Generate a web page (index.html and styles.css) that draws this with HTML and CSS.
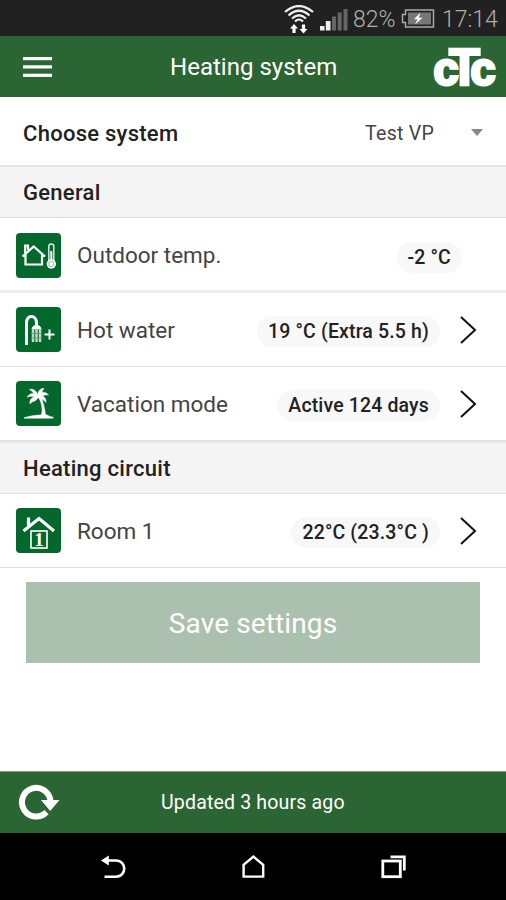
FILE: index.html
```html
<!DOCTYPE html>
<html lang="en">
<head>
  <meta charset="UTF-8" />
  <meta name="viewport" content="width=device-width, initial-scale=1.0" />
  <title>Heating system</title>
  <link rel="stylesheet" href="styles.css">
</head>
<body>
  <div class="status-bar">
    <svg class="wifi" width="30" height="30" viewBox="0 0 30 30" fill="none" stroke="#eee" stroke-width="2.200">
      <path d="M1 7Q15 -5 29 7" />
      <path d="M4.500 10.500Q15 1 25.500 10.500" />
      <path d="M8 13.500Q15 7 22 13.500" />
      <path d="M11 16.500Q15 12.500 19 16.500" />
      <path d="M10 19l4 4.500h-2.400v4.500h-3.200v-4.500h-2.400z" fill="#fff" stroke="none" />
      <path d="M19.500 28.500l4-4.500h-2.400v-4.500h-3.200v4.500h-2.400z" fill="#fff" stroke="none" />
    </svg>
    <svg class="signal" width="28" height="22" viewBox="0 0 28 22">
      <rect x="0" y="17" width="4.500" height="4.500" fill="#eee" />
      <rect x="5.800" y="12" width="4.700" height="9.500" fill="#eee" />
      <rect x="12" y="7.500" width="4" height="14" fill="#666" />
      <rect x="17.700" y="3.500" width="4" height="18" fill="#666" />
      <rect x="23.500" y="0" width="4" height="21.500" fill="#666" />
    </svg>
    <span class="percent">82%</span>
    <svg class="battery" width="34" height="19" viewBox="0 0 34 19">
      <path d="M4.500 1H32.500V18H4.500V13.500H1.500V5.500H4.500z" fill="none" stroke="#aaa" stroke-width="1.500" />
      <rect x="7" y="3.500" width="23" height="12" fill="#777" />
      <path d="M19.500 3.500L13 10.200h3.600L14 15.500l7.500-6.700h-3.800z" fill="#fff" />
    </svg>
    <span class="clock">17:14</span>
  </div>

  <header>
    <svg class="menu" width="29" height="22" viewBox="0 0 29 22" fill="#fff">
      <rect y="1" width="29" height="3.200" />
      <rect y="9.300" width="29" height="3.200" />
      <rect y="17.700" width="29" height="3.200" />
    </svg>
    <h1>Heating system</h1>
    <svg class="logo" width="66" height="61" viewBox="0 0 66 61" role="img" aria-label="CTC">
      <text y="49"><tspan class="logo-c" x="2.500" textLength="25" lengthAdjust="spacingAndGlyphs">c</tspan><tspan class="logo-t" x="18" textLength="31" lengthAdjust="spacingAndGlyphs">T</tspan><tspan class="logo-c" x="39.500" textLength="25" lengthAdjust="spacingAndGlyphs">c</tspan></text>
    </svg>
  </header>

  <main>
    <div class="choose">
      <h2>Choose system</h2>
      <span class="selected">Test VP</span>
      <span class="caret"></span>
    </div>

    <h2 class="section-title">General</h2>
    <div class="row thick">
      <svg class="icon" viewBox="0 0 45 45">
        <rect width="45" height="45" rx="4" fill="#04682d" />
        <path d="M6.500 23.500L17.700 13.500L29 23.500M9.500 21V31.500H26V21M9.200 20V12.500H12V17" fill="none" stroke="#fff" stroke-width="2.200" />
        <rect x="32.800" y="11" width="5" height="19" rx="2.500" fill="none" stroke="#d9e8dc" stroke-width="1.500" />
        <path d="M35.300 18V29" stroke="#fff" stroke-width="2" />
        <circle cx="35.300" cy="31" r="4.700" fill="#fff" />
        <circle cx="35.300" cy="31" r="2.600" fill="none" stroke="#78a985" stroke-width=".8" />
      </svg>
      <span class="label">Outdoor temp.</span>
      <span class="value last">-2 °C</span>
    </div>
    <div class="row">
      <svg class="icon" viewBox="0 0 45 45">
        <rect width="45" height="45" rx="4" fill="#04682d" />
        <path d="M10.500 38V16C10.500 7 20.500 7.500 20.500 16V19" fill="none" stroke="#fff" stroke-width="3" />
        <path d="M15.500 22.500Q16 18 20.500 18T25.500 22.500z" fill="#fff" />
        <path d="M17 22.500V35M20.500 22.500V35M24 22.500V35" stroke="#c5dccb" stroke-width="2.400" />
        <path d="M15 26.500H26M15 31H26" stroke="#629d73" stroke-width="1" />
        <path d="M28.500 27.500H38.500M33.500 22.500V32.500" stroke="#fff" stroke-width="2" />
      </svg>
      <span class="label">Hot water</span>
      <span class="value">19 °C (Extra 5.5 h)</span>
      <svg class="arrow" viewBox="0 0 17 28"><path d="M1 1L15 14L1 27" /></svg>
    </div>
    <div class="row">
      <svg class="icon" viewBox="0 0 45 45">
        <rect width="45" height="45" rx="4" fill="#04682d" />
        <g fill="#fff" stroke="#fff" stroke-width=".5">
          <path d="M22 15C18 11 14 12 11 16C16 14.500 18 16 22 16.500z" />
          <path d="M22 14C20 9 17 7.500 13.500 8.500C17 10 17.500 13 21 15.500z" />
          <path d="M22 15C21.500 10 24 7.500 28 7.500C25.500 10 26 13 23.500 15.500z" />
          <path d="M22 15C25 10.500 29 10 32.500 14C28.500 13 26 16 22.500 16.500z" />
          <path d="M22 15C27 14 30.500 16.500 30 21.500C27.500 18 25 18 22 16.500z" />
          <path d="M22 15C17 15.500 13 18 14 23C17 19 19 22 22.500 16z" />
          <path d="M22 15.500L24.500 15C27 20 29 28 29.500 34H25.500C27 28 25.500 21 22 15.500z" />
          <path d="M8 36.800Q17 34 24 34Q28 32.500 31 34Q34 36 37.500 36.300L37 37.200H8z" />
        </g>
      </svg>
      <span class="label">Vacation mode</span>
      <span class="value">Active 124 days</span>
      <svg class="arrow" viewBox="0 0 17 28"><path d="M1 1L15 14L1 27" /></svg>
    </div>

    <h2 class="section-title">Heating circuit</h2>
    <div class="row">
      <svg class="icon" viewBox="0 0 45 45">
        <rect width="45" height="45" rx="4" fill="#04682d" />
        <path d="M7.500 23L23 10.500L38 23M12.500 17.500V9.500" fill="none" stroke="#fff" stroke-width="3.200" />
        <rect x="15" y="23" width="16" height="17" fill="none" stroke="#fff" stroke-width="1.600" />
        <text class="room-number" x="23" y="38" text-anchor="middle">1</text>
      </svg>
      <span class="label">Room 1</span>
      <span class="value">22°C (23.3°C )</span>
      <svg class="arrow" viewBox="0 0 17 28"><path d="M1 1L15 14L1 27" /></svg>
    </div>

    <button class="save" disabled>Save settings</button>
  </main>

  <footer>
    <svg class="refresh" width="42" height="38" viewBox="0 0 42 38">
      <path d="M28.500 29.200A14.300 14.300 0 1 1 32.500 18" fill="none" stroke="#fff" stroke-width="6" />
      <path d="M23 17H41.500L32.200 28z" fill="#fff" />
    </svg>
    <span>Updated 3 hours ago</span>
  </footer>

  <nav>
    <svg width="26" height="26" viewBox="0 0 26 26" fill="none" stroke="#fff" stroke-width="2.600">
      <path d="M6 6.500H16C27 6.500 27 22.700 16 22.700H4.500" />
      <path d="M1 6.500L8.800 1.500V11.500z" fill="#fff" stroke="none" />
    </svg>
    <svg width="26" height="26" viewBox="0 0 26 26" fill="none" stroke="#fff" stroke-width="2.400">
      <path d="M3.600 22.600V10.800L13.400 2.600L23.200 10.800V22.600z" />
    </svg>
    <svg width="26" height="26" viewBox="0 0 26 26" fill="none" stroke="#fff" stroke-width="2.800">
      <rect x="2.800" y="7" width="17.500" height="15.700" />
      <path d="M10.500 2.800H24.300V16.500" />
    </svg>
  </nav>
</body>
</html>
```

FILE: styles.css
```css
* {
  box-sizing: border-box;
}
body {
  margin: 0;
  height: 900px;
  display: flex;
  flex-direction: column;
  font-family: Roboto, sans-serif;
  background: #fff;
  color: #222;
  overflow: hidden;
}
.status-bar {
  height: 36px;
  padding-right: 8px;
  background: #212121;
  color: #b0b0b0;
  display: flex;
  align-items: center;
  justify-content: flex-end;
  font-size: 23px;
  font-weight: 300;
  line-height: 36px;
}
.wifi {
  margin: 3px 6px 0 0;
}
.signal {
  margin: 3px 5px 0 0;
}
.battery {
  margin: 1px 7px 0 5px;
}
.percent,
.clock {
  padding-top: 3px;
  white-space: nowrap;
}
.percent {
  width: 43px;
}
.clock {
  width: 56px;
}
header {
  height: 61px;
  padding: 0 9px 0 23px;
  background: #2c6534;
  display: flex;
  align-items: center;
  justify-content: space-between;
}
header h1 {
  margin: 0 0 0 24px;
  width: 167px;
  color: #fff;
  font-size: 24px;
  font-weight: 400;
  letter-spacing: 0.02px;
  white-space: nowrap;
}
.logo {
  overflow: visible;
}
.logo text {
  fill: #fff;
  stroke: #fff;
  font-family: "Liberation Sans", sans-serif;
  font-weight: 700;
}
.logo-c {
  font-size: 46px;
  stroke-width: 3px;
}
.logo-t {
  font-size: 52px;
  stroke-width: 2.5px;
}
h2 {
  margin: 0;
  font-size: 22px;
  font-weight: 500;
  letter-spacing: 0.27px;
  white-space: nowrap;
}
.choose {
  height: 68px;
  padding: 4px 23px 0;
  display: flex;
  align-items: center;
}
.selected {
  margin-left: auto;
  width: 70px;
  font-size: 19.5px;
  letter-spacing: 0.3px;
  white-space: nowrap;
  color: #444;
}
.caret {
  margin: -2px 0 0 36px;
  border: 6.5px solid transparent;
  border-top: 7px solid #888;
  border-bottom: 0;
}
.section-title {
  height: 53px;
  padding-left: 23px;
  line-height: 51px;
  background: #f4f4f4;
  border-top: 2px solid #e6e6e6;
  border-bottom: 1px solid #dcdcdc;
}
.row {
  height: 74px;
  padding: 0 29px 0 16px;
  display: flex;
  align-items: center;
  border-bottom: 1px solid #e0e0e0;
}
.row.thick {
  height: 75px;
  padding-top: 2px;
  border-bottom: 3px solid #eee;
}
.icon {
  width: 45px;
  height: 45px;
}
.label {
  margin: 0 0 0 16px;
  font-size: 22.5px;
  font-weight: 400;
  color: #444;
  white-space: nowrap;
}
.value {
  margin: 4px 20px 0 auto;
  padding: 0 11px;
  height: 31px;
  border-radius: 16px;
  background: #f8f8f8;
  font-size: 19.5px;
  font-weight: 500;
  line-height: 31px;
  letter-spacing: 0.15px;
  white-space: nowrap;
}
.value.last {
  margin-right: 15px;
}
.arrow {
  width: 17px;
  height: 28px;
  fill: none;
  stroke: #111;
  stroke-width: 2;
}
.room-number {
  fill: #fff;
  font-family: "Liberation Serif", serif;
  font-size: 19px;
  font-weight: 700;
}
.save {
  display: block;
  width: 454px;
  height: 81px;
  margin: 14px auto 0;
  padding-top: 3px;
  border: 0;
  background: #acc0af;
  color: #fff;
  font-family: inherit;
  font-size: 28px;
  letter-spacing: 0.12px;
}
footer {
  margin-top: auto;
  height: 62px;
  padding-left: 18px;
  background: #2c6534;
  border-top: 1px solid #80a386;
  color: #fff;
  display: flex;
  align-items: center;
  font-size: 19.5px;
  letter-spacing: 0.18px;
}
.refresh {
  margin-top: -2px;
}
footer span {
  margin-left: 101px;
}
nav {
  height: 67px;
  background: #000;
  display: flex;
  justify-content: center;
  align-items: center;
  gap: 114px;
}
```
